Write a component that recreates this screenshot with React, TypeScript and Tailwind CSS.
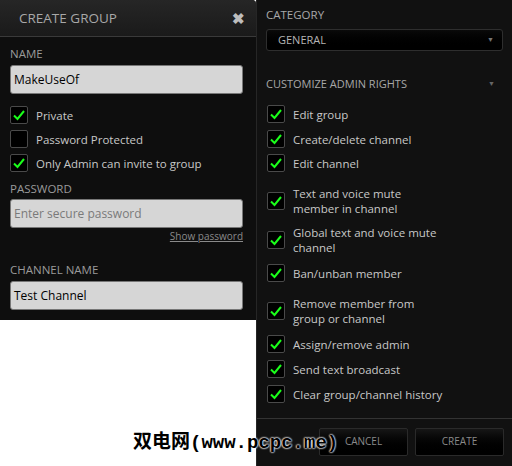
const font = { fontFamily: '"Open Sans", "Noto Sans", sans-serif' };

function Check({ on }: { on: boolean }) {
  return (
    <span className="flex h-[18px] w-[18px] shrink-0 items-center justify-center rounded-[2px] border border-[#4a4a4a] bg-black">
      {on && (
        <svg width="14" height="14" viewBox="0 0 14 14">
          <path d="M2 7.5 L5.5 11 L12 3" fill="none" stroke="#1aff1a" strokeWidth="2" />
        </svg>
      )}
    </span>
  );
}

function Row({ label, on = true }: { label: string; on?: boolean }) {
  return (
    <div className="flex items-center gap-[8px] text-[11.5px] leading-[15px] text-[#c8c8c8]">
      <Check on={on} />
      <span>{label}</span>
    </div>
  );
}

function Field({ value, placeholder }: { value?: string; placeholder?: string }) {
  return (
    <div className="flex h-[29px] items-center rounded-[3px] border border-[#777] bg-[#d6d6d6] px-[3px] text-[12px]">
      {value ? <span className="text-black">{value}</span> : <span className="text-[#7a7a7a]">{placeholder}</span>}
    </div>
  );
}

// gap above each item, tuned so the boxes sit where the screenshot has them
const rights = [
  { label: "Edit group", mt: "mt-0" },
  { label: "Create/delete channel", mt: "mt-[7px]" },
  { label: "Edit channel", mt: "mt-[6px]" },
  { label: "Text and voice mute member in channel", mt: "mt-[14px]", wrap: true },
  { label: "Global text and voice mute channel", mt: "mt-[9px]", wrap: true },
  { label: "Ban/unban member", mt: "mt-[9px]" },
  { label: "Remove member from group or channel", mt: "mt-[14px]", wrap: true },
  { label: "Assign/remove admin", mt: "mt-[9px]" },
  { label: "Send text broadcast", mt: "mt-[7px]" },
  { label: "Clear group/channel history", mt: "mt-[7px]" },
];

export default function App() {
  return (
    <div className="relative flex h-[466px] w-[512px] bg-white" style={font}>
      <div className="w-[256px]">
        <div className="h-[320px] rounded-tr-[4px] bg-[#0e0e0e]">
          <header className="flex h-[37px] items-center justify-between rounded-tr-[4px] border-b border-[#3a3a3a] bg-gradient-to-b from-[#262626] to-[#1a1a1a] pl-[19px] pr-[11px]">
            <span className="text-[13.5px] text-[#a8a8a8]">CREATE GROUP</span>
            <span className="text-[15px] font-bold text-[#bdbdbd]">✖</span>
          </header>
          <div className="px-[10px] pr-[13px]">
            <p className="mt-[9px] text-[11.5px] leading-[15px] text-[#9a9a9a]">NAME</p>
            <div className="mt-[4px]">
              <Field value="MakeUseOf" />
            </div>
            <div className="mt-[12px] flex flex-col gap-[6px]">
              <Row label="Private" />
              <Row label="Password Protected" on={false} />
              <Row label="Only Admin can invite to group" />
            </div>
            <p className="mt-[9px] text-[11.5px] leading-[15px] text-[#9a9a9a]">PASSWORD</p>
            <div className="mt-[3px]">
              <Field placeholder="Enter secure password" />
            </div>
            <p className="mt-[1px] text-right text-[10px] leading-[14px] text-[#8a8a8a] underline">Show password</p>
            <p className="mt-[19px] text-[11.5px] leading-[15px] text-[#9a9a9a]">CHANNEL NAME</p>
            <div className="mt-[4px]">
              <Field value="Test Channel" />
            </div>
          </div>
        </div>
      </div>
      <div className="flex h-[466px] w-[256px] flex-col border-l border-[#262626] bg-[#111111]">
        <div className="px-[9px]">
          <p className="mt-[7px] text-[11.5px] leading-[15px] text-[#a8a8a8]">CATEGORY</p>
          <div className="mt-[7px] flex h-[22px] items-center justify-between rounded-[3px] border border-[#2e2e2e] bg-gradient-to-b from-[#0a0a0a] to-black pl-[11px] pr-[8px] text-[11px] text-[#b5b5b5]">
            <span>GENERAL</span>
            <span className="text-[7px] text-[#777]">▼</span>
          </div>
          <div className="mt-[25px] flex items-center justify-between pr-[8px] text-[11px] leading-[15px] text-[#a8a8a8]">
            <span>CUSTOMIZE ADMIN RIGHTS</span>
            <span className="text-[7px] text-[#666]">▼</span>
          </div>
          <div className="mt-[14px] flex flex-col pl-[1px]">
            {rights.map((r) => (
              <div key={r.label} className={`flex items-center gap-[8px] text-[11.5px] leading-[15px] text-[#c8c8c8] ${r.mt}`}>
                <Check on />
                <span className={r.wrap ? "w-[148px]" : "whitespace-nowrap"}>{r.label}</span>
              </div>
            ))}
          </div>
        </div>
        <div className="mb-[2px] mt-auto flex h-[46px] items-center justify-end gap-[7px] border-t border-[#333] pr-[8px]">
          <button className="h-[28px] w-[89px] rounded-[2px] border border-[#2a2a2a] bg-gradient-to-b from-[#161616] to-black text-[10px] text-[#8a8a8a]">CANCEL</button>
          <button className="h-[28px] w-[89px] rounded-[2px] border border-[#2a2a2a] bg-gradient-to-b from-[#161616] to-black text-[10px] text-[#8a8a8a]">CREATE</button>
        </div>
      </div>
      <div
        className="absolute left-[133px] top-[429px] text-[19px] font-bold text-black"
        style={{ fontFamily: '"Liberation Mono", "Noto Sans CJK SC", monospace', textShadow: "0 0 2px #fff, 0 0 2px #fff, 0 0 2px #fff" }}
      >
        双电网(www.pcpc.me)
      </div>
    </div>
  );
}
